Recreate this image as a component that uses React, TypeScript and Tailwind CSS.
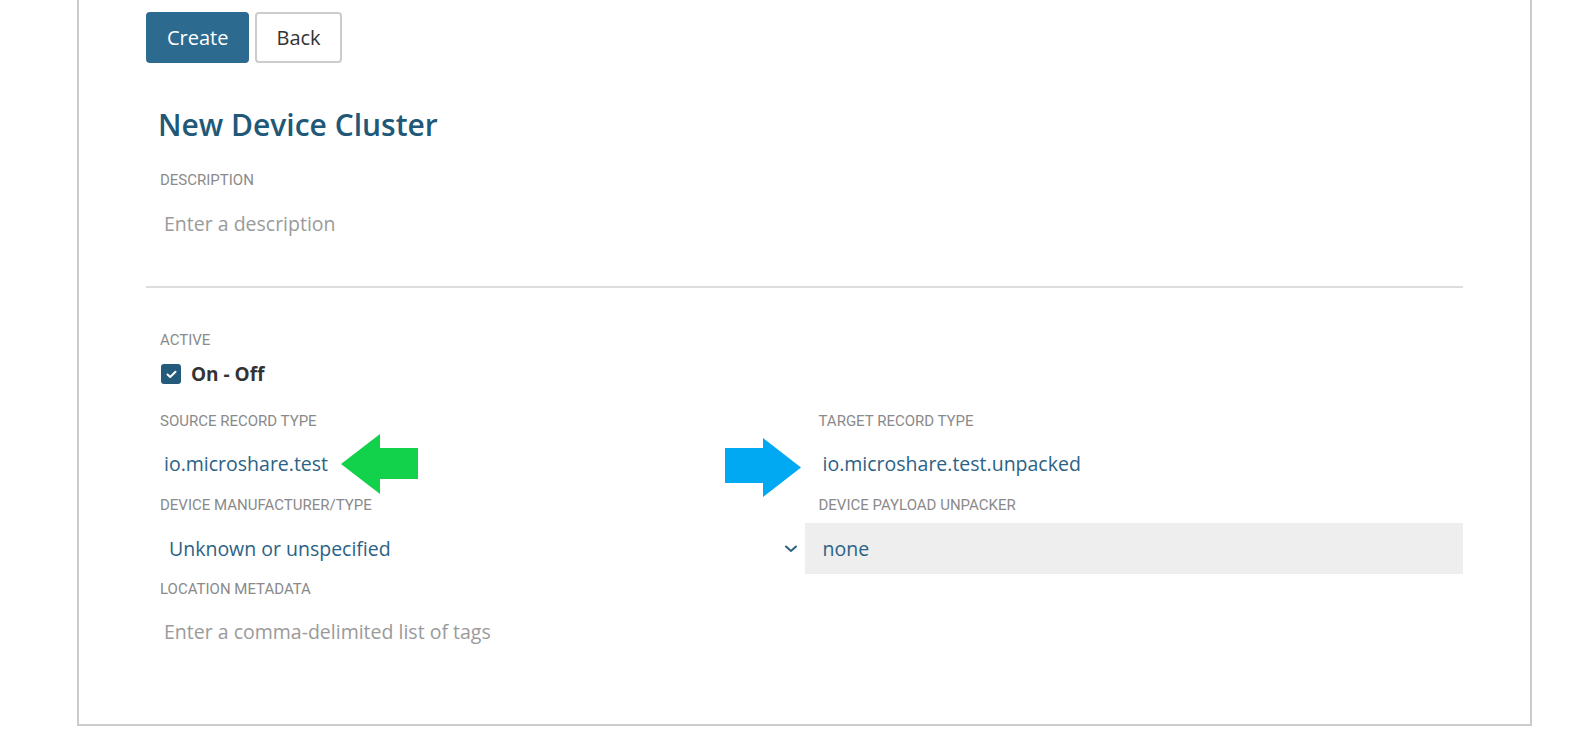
const openSans = "font-['Open_Sans',_'Liberation_Sans',_sans-serif]";
const roboto = "font-['Roboto',_'Liberation_Sans',_sans-serif]";

function Label({ children }: { children: string }) {
  return (
    <div className={`${roboto} pl-[14px] text-[15px] leading-[17px] text-[#8a8a8a] uppercase`}>
      {children}
    </div>
  );
}

function GreenArrow() {
  return (
    <svg width="77" height="60" viewBox="0 0 77 60" className="ml-[13px] shrink-0">
      <polygon points="0,30 39,0 39,14 77,14 77,45 39,45 39,60" fill="#12d14a" />
    </svg>
  );
}

function BlueArrow() {
  return (
    <svg width="76" height="59" viewBox="0 0 76 59" className="absolute left-[-80px] top-[25px]">
      <polygon points="0,10 38,10 38,0 76,29.5 38,59 38,45 0,45" fill="#00a9f1" />
    </svg>
  );
}

function Chevron() {
  return (
    <svg width="14" height="8" viewBox="0 0 14 8" fill="none">
      <path d="M2 1.5 L7 6 L12 1.5" stroke="#2a5f80" strokeWidth="2" strokeLinecap="round" />
    </svg>
  );
}

export default function App() {
  return (
    <div className={`min-h-screen bg-white ${openSans}`}>
      <div className="ml-[77px] w-[1455px] border-x-2 border-b-2 border-[#cccccc] px-[67px] pt-[12px] pb-[80px]">
        <div className="flex gap-[6px]">
          <button className="h-[51px] rounded-[4px] bg-[#2c6a8f] px-[21px] text-[20px] text-white">
            Create
          </button>
          <button className="h-[51px] rounded-[4px] border-2 border-[#cccccc] bg-white px-[19px] text-[20px] text-[#333333]">
            Back
          </button>
        </div>

        <h1 className="mt-[42px] pl-[12px] text-[30px] leading-[40px] font-semibold text-[#215877]">
          New Device Cluster
        </h1>

        <div className="mt-[27px]">
          <Label>Description</Label>
          <div className="mt-[23px] pl-[18px] text-[19.5px] leading-[24px] text-[#9a9a9a]">
            Enter a description
          </div>
        </div>

        <div className="mt-[50px] h-[2px] bg-[#dddddd]" />

        <div className="mt-[44px]">
          <Label>Active</Label>
          <div className="mt-[15px] flex h-[20px] items-center gap-[10px] pl-[15px]">
            <span className="flex h-[20px] w-[20px] items-center justify-center rounded-[3px] bg-[#245a7c]">
              <svg width="11" height="9" viewBox="0 0 11 9" fill="none">
                <path d="M1.5 4.5 L4.2 7 L9.5 1.8" stroke="white" strokeWidth="2" strokeLinecap="round" strokeLinejoin="round" />
              </svg>
            </span>
            <span className="text-[19px] leading-[20px] font-bold text-[#333333]">On - Off</span>
          </div>
        </div>

        <div className="mt-[29px] grid grid-cols-2">
          <div>
            <Label>Source Record Type</Label>
            <div className="mt-[22px] flex h-[24px] items-center pl-[18px]">
              <span className="text-[19.5px] leading-[24px] text-[#2b6285]">io.microshare.test</span>
              <GreenArrow />
            </div>
          </div>
          <div className="relative">
            <Label>Target Record Type</Label>
            <div className="mt-[22px] pl-[18px] text-[19.5px] leading-[24px] text-[#2b6285]">
              io.microshare.test.unpacked
            </div>
            <BlueArrow />
          </div>

          <div className="mt-[21px]">
            <Label>Device Manufacturer/Type</Label>
            <div className="mt-[9px] flex h-[51px] items-center justify-between pl-[23px] pr-[7px]">
              <span className="text-[19.5px] leading-[24px] text-[#2b6285]">Unknown or unspecified</span>
              <Chevron />
            </div>
          </div>
          <div className="mt-[21px]">
            <Label>Device Payload Unpacker</Label>
            <div className="mt-[9px] flex h-[51px] items-center bg-[#eeeeee] pl-[18px]">
              <span className="text-[19.5px] leading-[24px] text-[#2b6285]">none</span>
            </div>
          </div>

          <div className="mt-[7px]">
            <Label>Location Metadata</Label>
            <div className="mt-[22px] pl-[18px] text-[19.5px] leading-[24px] text-[#9a9a9a]">
              Enter a comma-delimited list of tags
            </div>
          </div>
        </div>
      </div>
    </div>
  );
}
